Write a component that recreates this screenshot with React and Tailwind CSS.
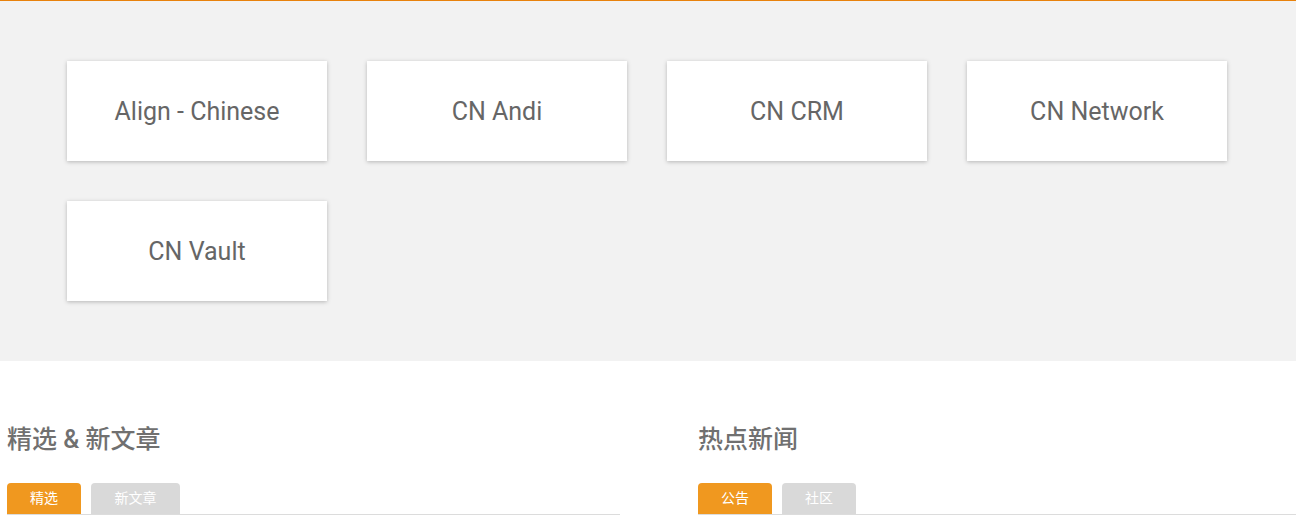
import React from 'react';

const apps = ['Align - Chinese', 'CN Andi', 'CN CRM', 'CN Network', 'CN Vault'];

function NewsColumn({ title, tabs, className }) {
  return (
    <div className={className}>
      <h2 className="text-[25px] leading-[30px] font-medium text-[#707070]">{title}</h2>
      <div className="mt-[28px] flex gap-[10px] border-b border-[#dcdcdc]">
        {tabs.map((t, i) => (
          <button
            key={t.label}
            className={
              i === 0
                ? 'h-[31px] rounded-t-[4px] bg-[#f0981f] text-[14px] text-white'
                : 'h-[31px] rounded-t-[4px] bg-[#d9d9d9] text-[14px] text-white'
            }
            style={{ width: t.w }}
          >
            {t.label}
          </button>
        ))}
      </div>
    </div>
  );
}

export default function App() {
  return (
    <div
      className="w-[1296px] min-h-[516px] bg-white overflow-hidden"
      style={{ fontFamily: 'Roboto, "Noto Sans CJK SC", sans-serif' }}
    >
      {/* app tiles */}
      <div className="border-t border-[#e8820c] bg-[#f2f2f2] pt-[60px] pb-[60px] pl-[67px]">
        <div className="grid w-[1160px] grid-cols-4 gap-[40px]">
          {apps.map(a => (
            <div
              key={a}
              className="flex h-[100px] items-center justify-center bg-white pt-[2px] text-[25px] text-[#666] shadow-[0_1px_4px_rgba(0,0,0,0.25)]"
            >
              {a}
            </div>
          ))}
        </div>
      </div>

      {/* news */}
      <div className="flex gap-[78px] pl-[7px] pt-[64px]">
        <NewsColumn
          title="精选 & 新文章"
          tabs={[{ label: '精选', w: 74 }, { label: '新文章', w: 89 }]}
          className="w-[613px]"
        />
        <NewsColumn
          title="热点新闻"
          tabs={[{ label: '公告', w: 74 }, { label: '社区', w: 74 }]}
          className="flex-1"
        />
      </div>
    </div>
  );
}
